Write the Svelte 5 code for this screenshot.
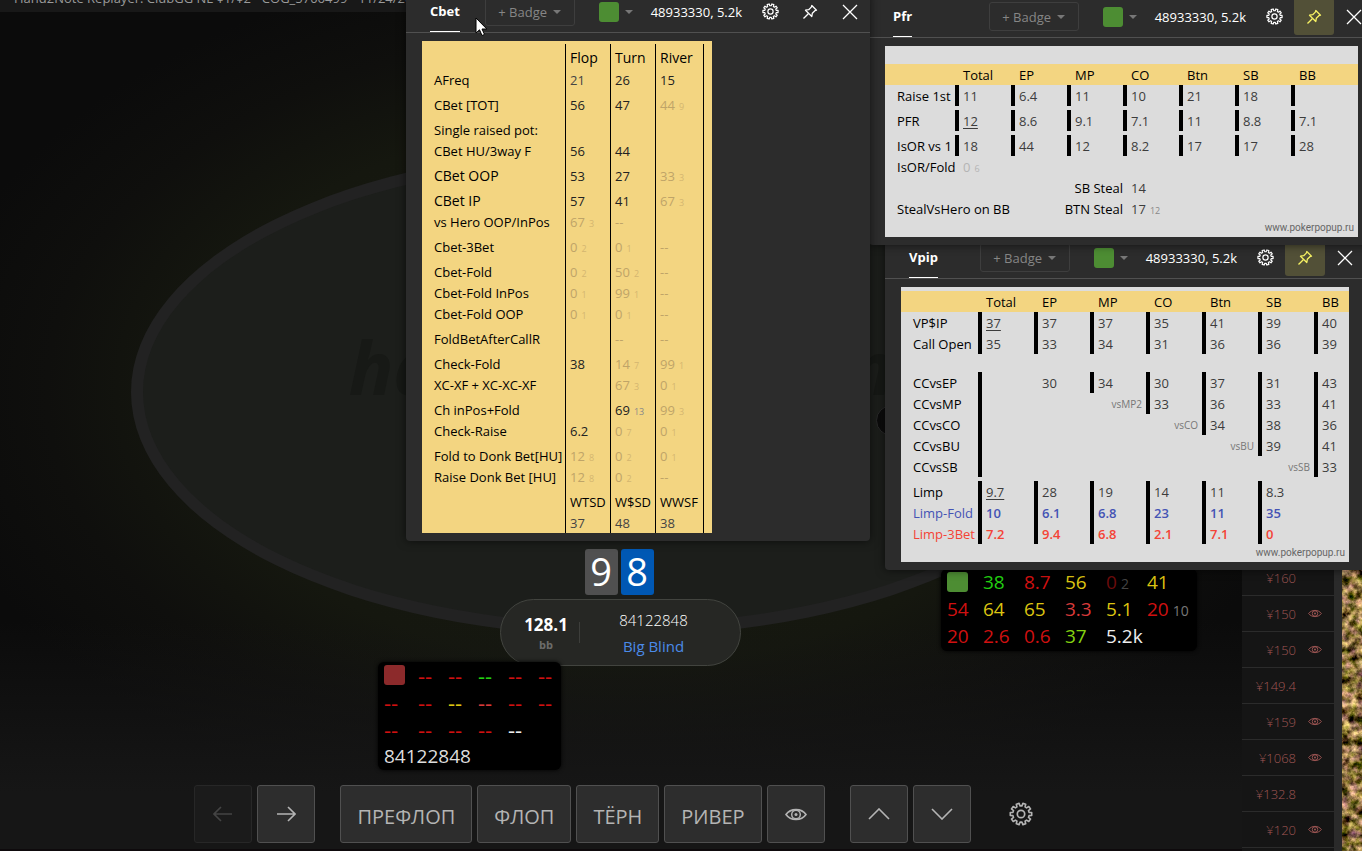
<script lang="ts">
    interface Cell {
        value?: string,
        sample?: string,
        tone?: string,
        bar?: boolean,
        note?: string
    }

    interface Row {
        label?: string,
        kind?: string,
        spacer?: number,
        cells: Cell[]
    }

    // "67:3:faint" -> value, sample size, tone
    function cell(text: string): Cell {
        const [value, sample, tone] = text.split(":");
        return { value, sample, tone: tone ?? (value === "--" ? "faint" : "") };
    }

    const cbetRows = [
        ["AFreq", "", "21::soft", "26", "15"],
        ["CBet [TOT]", "gap", "56", "47", "44:9:faint"],
        ["Single raised pot:", "gap", "", "", ""],
        ["CBet HU/3way F", "", "56", "44", ""],
        ["CBet OOP", "gap big", "53", "27", "33:3:faint"],
        ["CBet IP", "gap big", "57", "41", "67:3:faint"],
        ["vs Hero OOP/InPos", "", "67:3:faint", "--", ""],
        ["Cbet-3Bet", "gap", "0:2:faint", "0:1:faint", "--"],
        ["Cbet-Fold", "gap", "0:2:faint", "50:2:faint", "--"],
        ["Cbet-Fold InPos", "", "0:1:faint", "99:1:faint", "--"],
        ["Cbet-Fold OOP", "", "0:1:faint", "0:1:faint", "--"],
        ["FoldBetAfterCallR", "gap", "", "--", "--"],
        ["Check-Fold", "gap", "38", "14:7:faint", "99:1:faint"],
        ["XC-XF + XC-XC-XF", "", "", "67:3:faint", "0:1:faint"],
        ["Ch inPos+Fold", "gap", "", "69:13", "99:3:faint"],
        ["Check-Raise", "", "6.2", "0:7:faint", "0:1:faint"],
        ["Fold to Donk Bet[HU]", "gap", "12:8:faint", "0:2:faint", "0:1:faint"],
        ["Raise Donk Bet [HU]", "", "12:8:faint", "0:2:faint", "--"],
        ["", "gap names", "WTSD", "W$SD", "WWSF"],
        ["", "", "37::soft", "48::soft", "38::soft"]
    ].map(([label, kind, ...cells]) => ({ label, kind, cells: cells.map(cell) }));

    const positions = ["Total", "EP", "MP", "CO", "Btn", "SB", "BB"];

    // "~" drops the bar, "_" underlines, "-" leaves the cell empty
    function barCell(text: string): Cell {
        if (text === "-") return {};
        if (text.startsWith("vs")) return { note: text };
        return {
            value: text.replace(/^[~_]/, ""),
            bar: !text.startsWith("~"),
            tone: text.startsWith("_") ? "under" : ""
        };
    }

    function barRow(label: string, values: string[], kind = ""): Row {
        return { label, kind, cells: values.map(barCell) };
    }

    const pfrRows: Row[] = [
        barRow("Raise 1st", ["11", "6.4", "11", "10", "21", "18", ""]),
        { spacer: 4, cells: [] },
        barRow("PFR", ["_12", "8.6", "9.1", "7.1", "11", "8.8", "7.1"]),
        { spacer: 4, cells: [] },
        barRow("IsOR vs 1", ["18", "44", "12", "8.2", "17", "17", "28"])
    ];

    const vpipRows: Row[] = [
        barRow("VP$IP", ["_37", "37", "37", "35", "41", "39", "40"]),
        barRow("Call Open", ["35", "33", "34", "31", "36", "36", "39"]),
        { spacer: 18, cells: [] },
        barRow("CCvsEP", ["", "~30", "34", "30", "37", "31", "43"]),
        barRow("CCvsMP", ["", "-", "vsMP2", "33", "36", "33", "41"]),
        barRow("CCvsCO", ["", "-", "-", "vsCO", "34", "38", "36"]),
        barRow("CCvsBU", ["", "-", "-", "-", "vsBU", "39", "41"]),
        barRow("CCvsSB", ["", "-", "-", "-", "-", "vsSB", "33"]),
        { spacer: 4, cells: [] },
        barRow("Limp", ["_9.7", "28", "19", "14", "11", "8.3", "-"]),
        barRow("Limp-Fold", ["10", "6.1", "6.8", "23", "11", "35", "-"], "blue"),
        barRow("Limp-3Bet", ["7.2", "9.4", "6.8", "2.1", "7.1", "0", "-"], "red")
    ];

    const hudEmpty = [
        ["red", "red", "green", "red", "red"],
        ["red", "red", "yellow", "rose", "red", "red"],
        ["red", "red", "red", "red", "white"]
    ];

    const hudFull = [
        ["38 green", "8.7 red", "56 yellow", "0 dark 2", "41 yellow"],
        ["54 red", "64 yellow", "65 yellow", "3.3 rose", "5.1 yellow", "20 red 10"],
        ["20 red", "2.6 red", "0.6 red", "37 lime", "5.2k white"]
    ].map((row) => row.map((item) => item.split(" ")));

    const pots = [
        { amount: "¥160", seen: false },
        { amount: "¥150", seen: true },
        { amount: "¥150", seen: true },
        { amount: "¥149.4", seen: false },
        { amount: "¥159", seen: true },
        { amount: "¥1068", seen: true },
        { amount: "¥132.8", seen: false },
        { amount: "¥120", seen: true }
    ];

    const streets = ["ПРЕФЛОП", "ФЛОП", "ТЁРН", "РИВЕР"];

    function gearPath(teeth: number, outer: number, inner: number) {
        const step = (Math.PI * 2) / teeth;
        const points: string[] = [];
        for (let i = 0; i < teeth; i++) {
            for (const [shift, r] of [[-0.32, inner], [-0.22, outer], [0.22, outer], [0.32, inner]]) {
                const a = step * (i + 0.5 + shift);
                points.push(`${(12 + r * Math.sin(a)).toFixed(2)} ${(12 - r * Math.cos(a)).toFixed(2)}`);
            }
        }
        return `M${points.join("L")}Z`;
    }

    const gearShape = gearPath(10, 10.8, 8.2);
</script>

{#snippet gear(size: number)}
    <svg width={size} height={size} viewBox="0 0 24 24" fill="none" stroke="currentColor" stroke-width="1.7" stroke-linejoin="round">
        <path d={gearShape} />
        <circle cx="12" cy="12" r="3.7" />
    </svg>
{/snippet}

{#snippet eye(width: number)}
    <svg {width} height={width / 2 + 2} viewBox="0 0 22 13" fill="none" stroke="currentColor" stroke-width="1.5">
        <path d="M1 6.5C5.5 0 16.5 0 21 6.5C16.5 13 5.5 13 1 6.5Z" />
        <circle cx="11" cy="6.5" r="4.3" />
        <circle cx="11" cy="6.5" r="1.5" fill="currentColor" stroke="none" />
    </svg>
{/snippet}

{#snippet windowHeader(name: string, pinned: boolean)}
    <header class="window-header">
        <h2 class="window-tab">{name}</h2>
        <button class="badge-button">+ Badge <span class="caret"></span></button>
        <button class="color-button" aria-label="Player color"><span class="swatch"></span><span class="caret"></span></button>
        <span class="player">48933330, 5.2k</span>
        <button class="icon-button" aria-label="Settings">{@render gear(17)}</button>
        <button class={`icon-button ${pinned ? 'pinned' : ''}`} aria-label="Pin">
            <svg width="16" height="16" viewBox="0 0 16 16" fill="none" stroke="currentColor" stroke-width="1.3" stroke-linejoin="round">
                <path d="M9.8 1.5L14.5 6.2L12.9 6.7L10.3 9.3L9.8 12.5L3.5 6.2L6.7 5.7L9.3 3.1Z" />
                <path d="M6.3 9.7L1.5 14.5" />
            </svg>
        </button>
        <button class="icon-button" aria-label="Close">
            <svg width="16" height="16" viewBox="0 0 16 16" fill="none" stroke="currentColor" stroke-width="1.3">
                <path d="M1 1L15 15M15 1L1 15" />
            </svg>
        </button>
    </header>
{/snippet}

{#snippet positionHead()}
    <thead>
        <tr>
            <td></td>
            {#each positions as position}
                <th scope="col">{position}</th>
            {/each}
        </tr>
    </thead>
{/snippet}

{#snippet barRows(rows: Row[])}
    {#each rows as row}
        {#if row.spacer}
            <tr class="spacer"><td colspan="8" style:height={`${row.spacer}px`}></td></tr>
        {:else}
            <tr class={row.kind}>
                <th scope="row">{row.label}</th>
                {#each row.cells as c}
                    {#if c.note}
                        <td class="note">{c.note}</td>
                    {:else}
                        <td class:bar={c.bar}><span class={c.tone}>{c.value}</span></td>
                    {/if}
                {/each}
            </tr>
        {/if}
    {/each}
{/snippet}

<div class="desktop">
    <main class="replayer">
        <header class="title-bar">Hand2Note Replayer: ClubGG NL ¥1/¥2 - COG_5706499 - 11/24/2023</header>

        <section class="felt">
            <div class="table-oval"><span class="watermark">hand2note.com</span></div>
            <div class="dealer"></div>

            <div class="seat">
                <div class="cards">
                    <span class="card spade">9</span>
                    <span class="card diamond">8</span>
                </div>
                <div class="seat-info">
                    <div class="stack"><strong>128.1</strong><small>bb</small></div>
                    <div class="who"><span>84122848</span><span class="position">Big Blind</span></div>
                </div>
            </div>
        </section>

        <nav class="toolbar">
            <button class="tool" disabled aria-label="Back">
                <svg width="20" height="16" viewBox="0 0 20 16"><path d="M19 8H1M8 1L1 8L8 15" /></svg>
            </button>
            <button class="tool" aria-label="Forward">
                <svg width="20" height="16" viewBox="0 0 20 16"><path d="M1 8H19M12 1L19 8L12 15" /></svg>
            </button>
            <span class="break"></span>
            {#each streets as street}
                <button class="tool street">{street}</button>
            {/each}
            <button class="tool" aria-label="Show cards">{@render eye(22)}</button>
            <span class="break"></span>
            <button class="tool" aria-label="Previous hand">
                <svg width="22" height="12" viewBox="0 0 22 12"><path d="M1 11L11 1L21 11" /></svg>
            </button>
            <button class="tool" aria-label="Next hand">
                <svg width="22" height="12" viewBox="0 0 22 12"><path d="M1 1L11 11L21 1" /></svg>
            </button>
            <button class="tool plain" aria-label="Settings">{@render gear(24)}</button>
        </nav>
    </main>

    <aside class="hands">
        <ul>
            {#each pots as pot}
                <li>
                    <span class="amount">{pot.amount}</span>
                    <span class="seen">{#if pot.seen}{@render eye(14)}{/if}</span>
                </li>
            {/each}
        </ul>
    </aside>

    <div class="wallpaper">
        <svg width="100%" height="100%" preserveAspectRatio="none">
            <filter id="grass" x="0" y="0" width="100%" height="100%" color-interpolation-filters="sRGB">
                <feTurbulence type="fractalNoise" baseFrequency="0.13" numOctaves="5" seed="7" />
                <feColorMatrix values="1.6 0.3 0 0 -0.42  1.3 0.5 0 0 -0.47  1.2 0 0.2 0 -0.46  0 0 0 0 1" />
            </filter>
            <rect width="100%" height="100%" filter="url(#grass)" />
        </svg>
    </div>

    <section class="hud hud-full">
        {#each hudFull as row, i}
            {#if i === 0}<span class="hud-mark"></span>{/if}
            {#each row as [value, tone, sample]}
                <span class={tone}>{value}{#if sample}<small>{sample}</small>{/if}</span>
            {/each}
        {/each}
    </section>

    <section class="hud hud-empty">
        {#each hudEmpty as row, i}
            {#if i === 0}<span class="hud-mark"></span>{/if}
            {#each row as tone}
                <span class={tone}>--</span>
            {/each}
        {/each}
        <span></span>
        <span class="hud-name">84122848</span>
    </section>

    <section class="window vpip">
        {@render windowHeader("Vpip", true)}
        <div class="window-body">
            <div class="sheet">
                <table class="positions">
                    {@render positionHead()}
                    <tbody>{@render barRows(vpipRows)}</tbody>
                </table>
                <a class="site" href="http://www.pokerpopup.ru">www.pokerpopup.ru</a>
            </div>
        </div>
    </section>

    <section class="window pfr">
        {@render windowHeader("Pfr", true)}
        <div class="window-body">
            <div class="sheet">
                <table class="positions">
                    {@render positionHead()}
                    <tbody>
                        {@render barRows(pfrRows)}
                        <tr>
                            <th scope="row">IsOR/Fold</th>
                            <td colspan="7"><span class="faint">0<small>6</small></span></td>
                        </tr>
                        <tr>
                            <td colspan="4" class="steal">SB Steal</td>
                            <td colspan="4">14</td>
                        </tr>
                        <tr>
                            <th scope="row" colspan="2">StealVsHero on BB</th>
                            <td colspan="2" class="steal">BTN Steal</td>
                            <td colspan="4">17<small>12</small></td>
                        </tr>
                    </tbody>
                </table>
                <a class="site" href="http://www.pokerpopup.ru">www.pokerpopup.ru</a>
            </div>
        </div>
    </section>

    <section class="window cbet">
        {@render windowHeader("Cbet", false)}
        <div class="window-body">
            <div class="sheet">
                <table class="streets">
                    <thead>
                        <tr class="gap">
                            <td></td>
                            <th scope="col">Flop</th>
                            <th scope="col">Turn</th>
                            <th scope="col">River</th>
                            <td></td>
                        </tr>
                    </thead>
                    <tbody>
                        {#each cbetRows as row}
                            <tr class={row.kind}>
                                <th scope="row">{row.label}</th>
                                {#each row.cells as c}
                                    <td><span class={c.tone}>{c.value}{#if c.sample}<small>{c.sample}</small>{/if}</span></td>
                                {/each}
                                <td></td>
                            </tr>
                        {/each}
                    </tbody>
                </table>
            </div>
        </div>
    </section>

    <svg class="cursor" width="13" height="20" viewBox="0 0 13 20">
        <path d="M1 1V16L4.5 12.8L7 18.5L9.5 17.4L7 12H11.8Z" fill="#fff" stroke="#000" stroke-width="1" />
    </svg>
</div>

<style>
    :global(body) {
        margin: 0;
        background: #0b0b0b;
    }

    .desktop {
        position: relative;
        display: flex;
        height: 100vh;
        overflow: hidden;
        color: #fff;
        font-family: "Open Sans", "Noto Sans", sans-serif;
        font-size: 13px;
    }

    button {
        padding: 0;
        border: none;
        background: none;
        color: inherit;
        font: inherit;
        cursor: pointer;
    }

    .replayer {
        position: relative;
        display: flex;
        flex: 1;
        flex-direction: column;
        min-width: 0;
        background:
            linear-gradient(to bottom, transparent 73%, #161616 93%),
            radial-gradient(ellipse 700px 440px at 50% 46%, #191c12 0%, #15170f 62%, #0f0f0d 82%, #0b0b0b 100%);
    }

    .title-bar {
        height: 28px;
        margin-top: -16px;
        padding-left: 14px;
        background: #181818;
        color: #9a9a9a;
        line-height: 28px;
        white-space: nowrap;
    }

    .felt {
        position: relative;
        flex: 1;
    }

    .table-oval {
        position: absolute;
        top: 136px;
        right: 131px;
        left: 131px;
        display: flex;
        align-items: center;
        justify-content: center;
        box-sizing: border-box;
        height: 488px;
        border: 12px solid #222;
        border-radius: 50%;
        background: #1c1e1b;
    }

    .watermark {
        padding-bottom: 50px;
        color: #171916;
        font-size: 74px;
        font-style: italic;
        font-weight: 700;
        line-height: 74px;
    }

    .dealer {
        position: absolute;
        top: 393px;
        left: 876px;
        width: 29px;
        height: 29px;
        border: 1px solid #2a2a2a;
        border-radius: 50%;
        background: #0c0c0c;
    }

    .seat {
        position: absolute;
        top: 537px;
        left: 500px;
        display: flex;
        flex-direction: column;
        align-items: center;
        gap: 4px;
        width: 241px;
    }

    .cards {
        display: flex;
        gap: 3px;
        padding-right: 3px;
    }

    .card {
        width: 33px;
        height: 46px;
        border-radius: 3px;
        font-size: 38px;
        font-weight: 500;
        line-height: 44px;
        text-align: center;
    }

    .spade {
        background: #505050;
    }

    .diamond {
        background: #0058b4;
    }

    .seat-info {
        display: flex;
        align-items: center;
        box-sizing: border-box;
        width: 100%;
        height: 67px;
        border: 1px solid #42443f;
        border-radius: 34px;
        background: #262724;
    }

    .stack,
    .who {
        display: flex;
        flex-direction: column;
        align-items: center;
    }

    .stack {
        width: 54px;
        margin-left: 18px;
        padding-right: 6px;
    }

    .stack strong {
        font-size: 17px;
        line-height: 24px;
    }

    .stack small {
        color: #6c6c6a;
        font-size: 11px;
        font-weight: 700;
        line-height: 16px;
    }

    .who {
        flex: 1;
        margin-right: 12px;
        font-size: 15px;
        font-weight: 300;
        line-height: 26px;
        background: linear-gradient(#3d3e3b, #3d3e3b) left center / 1px 21px no-repeat;
    }

    .position {
        color: #4b8be8;
        font-weight: 400;
    }

    .toolbar {
        display: flex;
        align-items: center;
        justify-content: center;
        gap: 5px;
        padding-bottom: 6px;
        border-bottom: 2px solid #0e0a0c;
    }

    .tool {
        display: flex;
        align-items: center;
        justify-content: center;
        box-sizing: border-box;
        width: 58px;
        height: 58px;
        border: 1px solid #505050;
        border-radius: 3px;
        background: #2d2d2d;
        color: #b4b4b4;
        font-size: 20px;
    }

    .tool path {
        fill: none;
        stroke: currentColor;
        stroke-width: 1.6;
    }

    .tool:disabled {
        border-color: #272727;
        background: #1b1b1b;
        color: #444;
    }

    .street {
        width: auto;
        padding: 4px 16px 0;
    }

    .plain {
        width: 54px;
        margin-left: 18px;
        border-color: transparent;
        background: none;
    }

    .break {
        width: 15px;
    }

    .hands {
        display: flex;
        flex-direction: column;
        justify-content: flex-end;
        box-sizing: border-box;
        width: 100px;
        padding-bottom: 3px;
        border-right: 8px solid #2a2a2a;
        background: #151515;
        color: #a05654;
    }

    .hands ul {
        margin: 0;
        padding: 0;
        list-style: none;
    }

    .hands li {
        display: flex;
        align-items: center;
        justify-content: flex-end;
        gap: 12px;
        box-sizing: border-box;
        height: 36px;
        padding-right: 12px;
        border-bottom: 1px solid #2b2b2b;
    }

    .amount {
        font-weight: 300;
    }

    .seen {
        display: flex;
        width: 14px;
    }

    .wallpaper {
        width: 20px;
        background: #8d7440;
    }

    .wallpaper svg {
        display: block;
    }

    .hud {
        position: absolute;
        display: grid;
        grid-auto-rows: 27px;
        box-sizing: border-box;
        padding-left: 6px;
        border-radius: 6px;
        background: #000;
        box-shadow: 0 0 4px #000;
        font-size: 19px;
        line-height: 27px;
        white-space: nowrap;
    }

    .hud-full {
        top: 569px;
        left: 941px;
        grid-template-columns: 36px repeat(5, 41px);
        width: 256px;
        height: 82px;
    }

    .hud-empty {
        top: 662px;
        left: 378px;
        grid-template-columns: 34px repeat(5, 30px);
        width: 183px;
        height: 108px;
    }

    .hud-empty span {
        font-size: 22px;
    }

    .hud-mark {
        width: 21px;
        height: 20px;
        margin-top: 3px;
        border-radius: 3px;
        background: #4d8d33;
    }

    .hud-empty .hud-mark {
        background: #8c2a2b;
    }

    .hud small {
        margin-left: 4px;
        color: #777;
        font-size: 14px;
    }

    .hud .dark small {
        color: #444;
    }

    .hud-empty .hud-name {
        grid-column: 1 / -1;
        color: #ddd;
        font-size: 19px;
    }

    .red { color: #d01010; }
    .rose { color: #d83a3a; }
    .green { color: #22d011; }
    .lime { color: #84d311; }
    .yellow { color: #dcc411; }
    .dark { color: #6c0c0c; }
    .white { color: #eee; }

    .window {
        position: absolute;
        border-radius: 0 0 4px 4px;
        background: #2c2c2c;
        box-shadow: 0 0 10px rgba(0, 0, 0, 0.6);
    }

    .cbet {
        top: -7px;
        left: 406px;
        width: 464px;
    }

    .pfr {
        top: -2px;
        left: 869px;
        width: 505px;
    }

    .vpip {
        top: 239px;
        left: 885px;
        width: 480px;
    }

    .window-header {
        display: flex;
        align-items: center;
        box-sizing: border-box;
        height: 40px;
        padding-bottom: 2px;
        padding-left: 24px;
        border-bottom: 1px solid #505050;
    }

    .window-tab {
        align-self: flex-start;
        box-sizing: border-box;
        height: 39px;
        margin: 0 auto 0 0;
        border-bottom: 1px solid #fff;
        font-size: 13px;
        font-weight: 700;
        line-height: 37px;
    }

    .badge-button {
        display: flex;
        align-items: center;
        justify-content: center;
        gap: 6px;
        box-sizing: border-box;
        width: 90px;
        height: 29px;
        border: 1px solid #3e3e3e;
        border-radius: 3px;
        color: #868686;
    }

    .caret {
        border: 4px solid transparent;
        border-top-color: #777;
        border-bottom: none;
    }

    .color-button {
        display: flex;
        align-items: center;
        gap: 6px;
        margin: 0 18px 0 24px;
    }

    .swatch {
        width: 20px;
        height: 20px;
        border-radius: 3px;
        background: #4d8d33;
    }

    .player {
        margin-right: 8px;
    }

    .icon-button {
        display: flex;
        align-items: center;
        justify-content: center;
        width: 40px;
        height: 37px;
        border-radius: 3px;
    }

    .pinned {
        background: #525037;
        color: #f7f263;
    }

    .window-body {
        display: flex;
        padding: 8px 16px;
    }

    .sheet {
        background: #dcdcdc;
        color: #000;
    }

    .cbet .sheet {
        width: 290px;
        padding-top: 3px;
        background: #f3d581;
    }

    .pfr .sheet {
        width: 473px;
        padding-top: 18px;
    }

    .vpip .sheet {
        width: 448px;
        padding-top: 4px;
    }

    table {
        width: 100%;
        border-collapse: separate;
        border-spacing: 0;
        table-layout: fixed;
    }

    th,
    td {
        box-sizing: border-box;
        height: 21px;
        padding: 0;
        font-weight: 400;
        line-height: 20px;
        text-align: left;
        vertical-align: bottom;
        white-space: nowrap;
    }

    td {
        color: #222;
    }

    td small {
        margin-left: 4px;
        color: #888;
        font-size: 9px;
        line-height: 0;
    }

    tbody th {
        padding-left: 12px;
    }

    .streets th:not([scope="row"]),
    .streets td:not(:first-child) {
        padding-left: 4px;
        border-left: 1px solid #000;
    }

    .streets thead td:first-child {
        width: 143px;
    }

    .streets thead th {
        width: 45px;
        font-size: 14px;
        line-height: 22px;
    }

    .streets thead th:nth-child(4) {
        width: 48px;
    }

    .gap th,
    .gap td {
        height: 25px;
    }

    .big th {
        font-size: 14px;
    }

    .names td {
        color: #000;
    }

    .soft {
        color: #444;
    }

    .faint {
        color: #bfa468;
    }

    .faint small {
        color: #d3b670;
    }

    .positions thead {
        background: #f3d581;
    }

    .positions thead td:first-child {
        width: 70px;
    }

    .vpip .positions thead td:first-child {
        width: 77px;
    }

    .positions thead th {
        width: 56px;
        padding-left: 8px;
    }

    .positions thead th:last-child {
        width: auto;
    }

    .positions tbody td {
        padding-left: 4px;
        border-left: 4px solid transparent;
        color: #3c3c3c;
    }

    .positions tbody td.bar {
        border-left-color: #000;
    }

    .positions .spacer td {
        line-height: 0;
    }

    .positions .under {
        text-decoration: underline;
        text-underline-offset: 2px;
    }

    .positions .faint,
    .positions .faint small {
        color: #b4b4b4;
    }

    .positions tbody .note {
        padding-right: 4px;
        color: #777;
        font-size: 10px;
        text-align: right;
    }

    .positions tbody .steal {
        color: #000;
        text-align: right;
    }

    .positions .blue th,
    .positions .blue td {
        color: #4453b4;
    }

    .positions .red th,
    .positions .red td {
        color: #f44336;
    }

    .positions .blue td,
    .positions .red td {
        font-weight: 600;
    }

    .site {
        display: block;
        padding-right: 4px;
        color: #666;
        font-family: Roboto, "Open Sans", sans-serif;
        font-size: 10px;
        line-height: 18px;
        text-align: right;
        text-decoration: none;
    }

    .cursor {
        position: absolute;
        top: 17px;
        left: 475px;
    }
</style>
